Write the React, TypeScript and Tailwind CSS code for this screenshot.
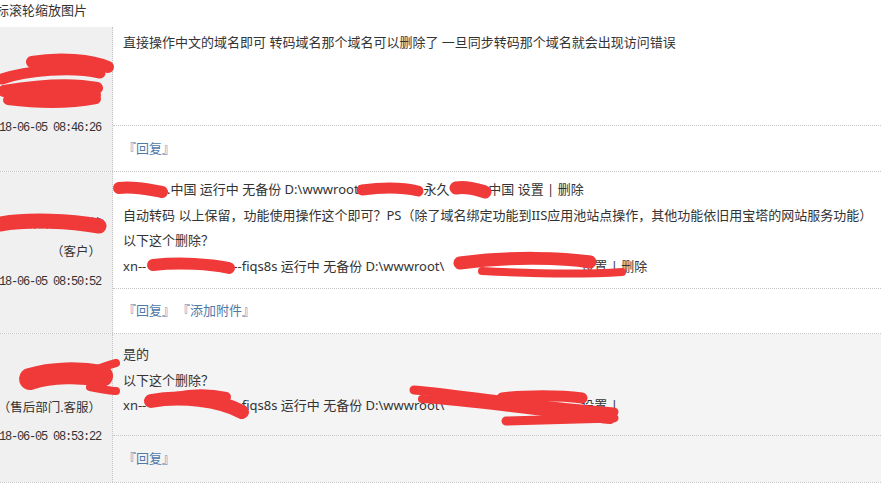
import React from "react";

const sans = "font-['Noto_Sans','Noto_Sans_CJK_SC',sans-serif]";

function Gap({ w }: { w: string }) {
  return <span className={`inline-block ${w}`} />;
}

type RowProps = {
  name: string;
  role: string;
  date: string;
  contentH: string;
  contentPt: string;
  replyH: string;
  rightBg: string;
  links: string[];
  children: React.ReactNode;
};

function Row({ name, role, date, contentH, contentPt, replyH, rightBg, links, children }: RowProps) {
  return (
    <div className="flex border-b border-dotted border-[#c6c6c6]">
      <div className="w-[113px] shrink-0 bg-[#f0f0f0] border-r border-dotted border-[#c6c6c6] flex flex-col justify-center items-end pr-[11px] text-[#333]">
        <div className="h-[29px] flex items-center text-[12px] whitespace-nowrap">{name}</div>
        <div className="h-[29px] flex items-center text-[12.5px] whitespace-nowrap">{role}</div>
        <div className="h-[29px] flex items-center font-['Liberation_Mono',monospace] text-[12px] tracking-[-1.2px] whitespace-nowrap">
          {date}
        </div>
      </div>
      <div className={`flex-1 flex flex-col ${rightBg}`}>
        <div className={`${contentH} ${contentPt} pl-[10px] text-[13px] leading-[25.5px] text-[#333] whitespace-nowrap border-b border-dotted border-[#c6c6c6]`}>
          {children}
        </div>
        <div className={`${replyH} flex items-center gap-[2px] pl-[10px] text-[13px] text-[#4f7aa8]`}>
          {links.map((l) => (
            <span key={l}>『{l}』</span>
          ))}
        </div>
      </div>
    </div>
  );
}

function Scribbles() {
  const red = "#f03a3a";
  return (
    <svg className="absolute left-0 top-0 pointer-events-none" width={881} height={488} viewBox="0 0 881 488" fill="none" stroke={red} strokeLinecap="round" strokeLinejoin="round">
      {/* row 1 name */}
      <path d="M32 62 C60 57 92 60 108 67" strokeWidth={12} />
      <path d="M2 79 C28 70 72 67 100 73" strokeWidth={11} />
      <path d="M4 91 C40 85 72 83 97 88" strokeWidth={12} />
      <path d="M10 96 C40 94 70 94 96 95" strokeWidth={10} />
      <path d="M8 100 C40 104 70 104 96 99" strokeWidth={10} />
      {/* row 2 name */}
      <path d="M0 224 C30 219 70 221 99 226" strokeWidth={15} />
      {/* row 2 line 1 */}
      <path d="M119 188 C135 186 150 190 162 192" strokeWidth={12} />
      <path d="M362 190 C385 187 405 188 418 191" strokeWidth={11} />
      <path d="M456 188 C468 186 478 190 485 192" strokeWidth={13} />
      {/* row 2 line 4 */}
      <path d="M153 265 C180 262 210 264 229 268" strokeWidth={12} />
      <path d="M460 263 C510 256 565 258 590 262" strokeWidth={13} />
      <path d="M482 271 C540 274 592 274 622 272" strokeWidth={8} />
      {/* row 3 name */}
      <path d="M30 379 C52 372 80 372 102 376" strokeWidth={22} />
      <path d="M90 372 C100 368 108 365 116 363" strokeWidth={8} />
      <path d="M90 387 C100 389 110 391 116 391" strokeWidth={8} />
      {/* row 3 line 3 */}
      <path d="M151 401 C180 395 220 400 242 412" strokeWidth={14} />
      <path d="M176 397 C195 393 212 394 226 397" strokeWidth={10} />
      <path d="M414 390 C470 395 525 405 614 412" strokeWidth={9} />
      <path d="M422 399 C480 403 540 412 610 420" strokeWidth={8} />
      <path d="M502 398 C525 395 560 395 582 398" strokeWidth={11} />
      <path d="M506 421 C545 420 585 419 614 418" strokeWidth={9} />
    </svg>
  );
}

export default function App() {
  return (
    <div className={`relative w-[881px] h-[488px] overflow-hidden bg-white ${sans}`}>
      <div className="h-[27px] leading-[20px] text-[13px] text-[#333] whitespace-nowrap ml-[-17px]">鼠标滚轮缩放图片</div>

      <Row
        name="某某某某某"
        role="（某某公司.客户）"
        date="18-06-05 08:46:26"
        contentH="h-[99px]"
        contentPt="pt-[3px]"
        replyH="h-[45px]"
        rightBg="bg-white"
        links={["回复"]}
      >
        <div>直接操作中文的域名即可 转码域名那个域名可以删除了 一旦同步转码那个域名就会出现访问错误</div>
      </Row>

      <Row
        name="某某某某某某"
        role="（客户）"
        date="18-06-05 08:50:52"
        contentH="h-[117px]"
        contentPt="pt-[5px]"
        replyH="h-[44px]"
        rightBg="bg-white"
        links={["回复", "添加附件"]}
      >
        <div>
          <Gap w="w-[44px]" />
          .中国 运行中 无备份 D:\wwwroot\
          <Gap w="w-[60px]" />
          永久 <Gap w="w-[32px]" />
          .中国 设置 | 删除
        </div>
        <div>自动转码 以上保留，功能使用操作这个即可？PS（除了域名绑定功能到IIS应用池站点操作，其他功能依旧用宝塔的网站服务功能）</div>
        <div>以下这个删除？</div>
        <div>
          xn--
          <Gap w="w-[87px]" />
          --fiqs8s 运行中 无备份 D:\wwwroot\
          <Gap w="w-[137px]" />
          设置 | 删除
        </div>
      </Row>

      <Row
        name="某某某某"
        role="（售后部门.客服）"
        date="18-06-05 08:53:22"
        contentH="h-[102px]"
        contentPt="pt-[8px]"
        replyH="h-[46px]"
        rightBg="bg-[#f4f4f4]"
        links={["回复"]}
      >
        <div>是的</div>
        <div>以下这个删除？</div>
        <div>
          xn--
          <Gap w="w-[87px]" />
          --fiqs8s 运行中 无备份 D:\wwwroot\
          <Gap w="w-[137px]" />
          设置 |
        </div>
      </Row>

      <Scribbles />
    </div>
  );
}
